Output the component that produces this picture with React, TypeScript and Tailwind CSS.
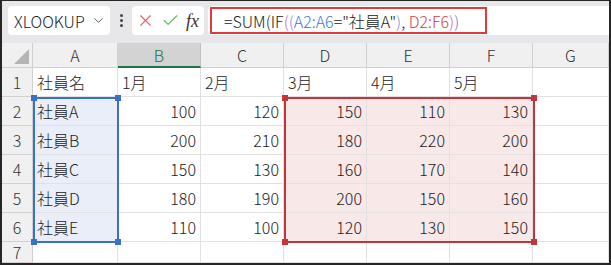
import { ChevronDown, X, Check } from "lucide-react";

const font = "font-['Noto_Sans_CJK_JP','Noto_Sans',sans-serif] font-light";

const cols = ["A", "B", "C", "D", "E", "F", "G"];

const rows: (string | number)[][] = [
  ["社員名", "1月", "2月", "3月", "4月", "5月", ""],
  ["社員A", 100, 120, 150, 110, 130, ""],
  ["社員B", 200, 210, 180, 220, 200, ""],
  ["社員C", 150, 130, 160, 170, 140, ""],
  ["社員D", 180, 190, 200, 150, 160, ""],
  ["社員E", 110, 100, 120, 130, 150, ""],
  ["", "", "", "", "", "", ""],
];

const cellBg = (r: number, c: number) => {
  if (r >= 1 && r <= 5 && c === 0) return "bg-[#e9eef8]";
  if (r >= 1 && r <= 5 && c >= 3 && c <= 5) return "bg-[#f8e8e8]";
  return "bg-white";
};

const Handle = ({ cls }: { cls: string }) => (
  <div className={`absolute w-[6px] h-[6px] ${cls}`} />
);

export default function App() {
  return (
    <div className={`w-[611px] h-[265px] bg-[#262626] pl-[2px] pr-[2px] pt-[1px] pb-[2px] ${font}`}>
      <div className="w-full h-full flex flex-col bg-white overflow-hidden">
        {/* formula bar */}
        <div className="h-[42px] shrink-0 bg-[#e7e7ea] flex items-start pt-[5px] pl-[6px] pr-0">
          <div className="w-[102px] h-[29px] bg-white rounded-[4px] flex items-center pl-[6px] pr-[4px] justify-between">
            <span className="text-[16px] text-[#222] leading-none">XLOOKUP</span>
            <ChevronDown className="w-[15px] h-[15px] text-[#555]" strokeWidth={1.5} />
          </div>
          <div className="w-[22px] h-[29px] flex flex-col items-center justify-center gap-[2px]">
            <span className="w-[3px] h-[3px] bg-[#444] rounded-full" />
            <span className="w-[3px] h-[3px] bg-[#444] rounded-full" />
            <span className="w-[3px] h-[3px] bg-[#444] rounded-full" />
          </div>
          <div className="w-[72px] h-[29px] bg-white rounded-[4px] flex items-center justify-between pl-[4px] pr-[5px]">
            <X className="w-[19px] h-[19px] text-[#e06666]" strokeWidth={1.4} />
            <Check className="w-[19px] h-[19px] text-[#5cb85c]" strokeWidth={1.4} />
            <span className="font-['Liberation_Serif',serif] italic font-normal text-[18px] text-[#333] leading-none">
              fx
            </span>
          </div>
          <div className="flex-1 h-[29px] ml-[4px] bg-white rounded-l-[4px] relative flex items-center">
            <div className="absolute left-[2px] top-[1px] w-[277px] h-[27px] border-2 border-[#e03a3e]" />
            <span className="ml-[16px] text-[16px] leading-none text-[#222] whitespace-nowrap">
              =SUM(IF
              <span className="text-[#c85ac8]">(</span>
              <span className="text-[#6f8fe6]">(</span>
              <span className="text-[#3c78d8]">A2:A6</span>
              ="社員A"
              <span className="text-[#6f8fe6]">)</span>,{" "}
              <span className="text-[#d0424a]">D2:F6</span>
              <span className="text-[#c85ac8]">)</span>
              <span className="text-[#6f6fd0]">)</span>
            </span>
          </div>
        </div>

        {/* grid */}
        <div className="relative flex-1">
          <div className="grid grid-cols-[31px_85px_83px_83px_83px_83px_83px_1fr] grid-rows-[25px_29px_29px_29px_29px_29px_29px_21px]">
            <div className="bg-[#f0f0f0] border-r border-b border-[#d0d0d0] relative">
              <div className="absolute right-[3px] bottom-[3px] w-0 h-0 border-l-[15px] border-l-transparent border-b-[15px] border-b-[#b4b4b4]" />
            </div>
            {cols.map((c) =>
              c === "B" ? (
                <div
                  key={c}
                  className="bg-[#d3d3d3] border-r border-[#c0c0c0] border-b-2 border-b-[#217346] flex items-center justify-center text-[16px] text-[#217346]"
                >
                  {c}
                </div>
              ) : (
                <div
                  key={c}
                  className="bg-[#f0f0f0] border-r border-b border-[#d0d0d0] flex items-center justify-center text-[16px] text-[#333]"
                >
                  {c}
                </div>
              )
            )}
            {rows.map((row, r) => (
              <>
                <div
                  key={`h${r}`}
                  className="bg-[#f0f0f0] border-r border-b border-[#d0d0d0] flex items-center justify-center text-[16px] text-[#333]"
                >
                  {r + 1}
                </div>
                {row.map((v, c) => (
                  <div
                    key={`${r}-${c}`}
                    className={`${cellBg(r, c)} border-r border-b border-[#e1e1e1] flex items-center px-[4px] text-[16px] text-[#222] ${
                      typeof v === "number" ? "justify-end" : "justify-start"
                    }`}
                  >
                    {v}
                  </div>
                ))}
              </>
            ))}
          </div>

          {/* range highlights */}
          <div className="absolute left-[31px] top-[54px] w-[86px] h-[146px] border-2 border-[#3a70c8]">
            <Handle cls="bg-[#3a70c8] -left-[4px] -top-[4px]" />
            <Handle cls="bg-[#3a70c8] -right-[4px] -top-[4px]" />
            <Handle cls="bg-[#3a70c8] -left-[4px] -bottom-[4px]" />
            <Handle cls="bg-[#3a70c8] -right-[4px] -bottom-[4px]" />
          </div>
          <div className="absolute left-[282px] top-[54px] w-[251px] h-[146px] border-2 border-[#c0363c]">
            <Handle cls="bg-[#c0363c] -left-[4px] -top-[4px]" />
            <Handle cls="bg-[#c0363c] -right-[4px] -top-[4px]" />
            <Handle cls="bg-[#c0363c] -left-[4px] -bottom-[4px]" />
            <Handle cls="bg-[#c0363c] -right-[4px] -bottom-[4px]" />
          </div>
        </div>
      </div>
    </div>
  );
}
